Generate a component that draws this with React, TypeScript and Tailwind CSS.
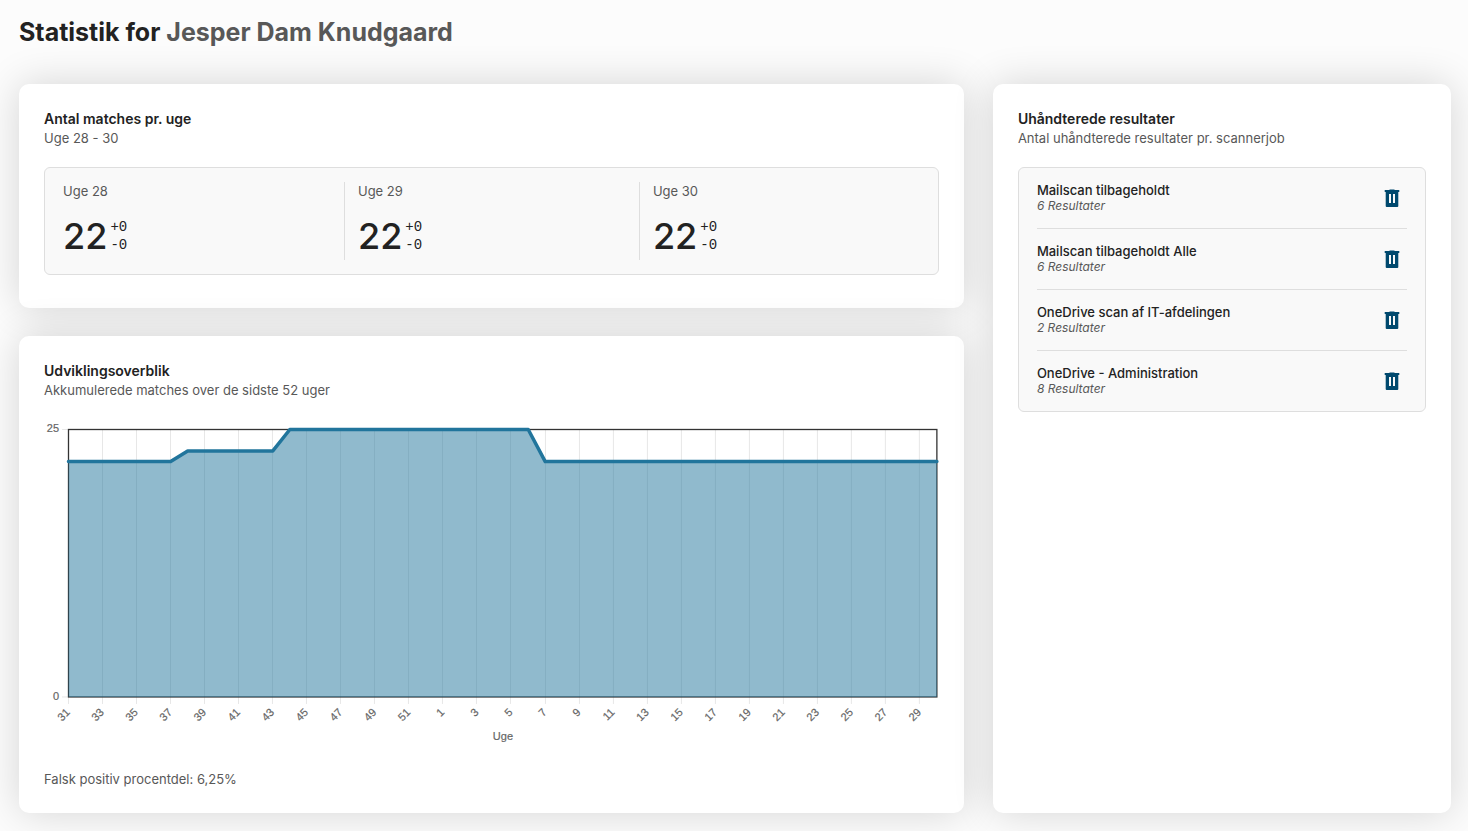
import React from "react";

const weeks = [28, 29, 30];

const jobs = [
  { name: "Mailscan tilbageholdt", count: 6 },
  { name: "Mailscan tilbageholdt Alle", count: 6 },
  { name: "OneDrive scan af IT-afdelingen", count: 2 },
  { name: "OneDrive - Administration", count: 8 },
];

const series = [
  ...Array(7).fill(22),
  ...Array(6).fill(23),
  ...Array(15).fill(25),
  ...Array(24).fill(22),
] as number[];

const weekNumbers = series.map((_, i) => (i < 22 ? 31 + i : i - 21));

function Card({ title, subtitle, className = "", children }: {
  title: string;
  subtitle: string;
  className?: string;
  children: React.ReactNode;
}) {
  return (
    <section className={`rounded-[10px] bg-white px-[25px] pt-[25px] shadow-[0_0_40px_rgba(0,0,0,0.16)] ${className}`}>
      <h2 className="text-sm leading-5 font-semibold">{title}</h2>
      <p className="text-[13px] leading-[18px] text-[#585858]">{subtitle}</p>
      {children}
    </section>
  );
}

function TrashIcon() {
  return (
    <svg viewBox="0 0 16 18" className="h-[18px] w-4" fill="#00496e" aria-hidden="true">
      <path fillRule="evenodd" d="M5.5 0.5h5V1H15.300v2h-1V17a1 1 0 0 1-1 1H2.700a1 1 0 0 1-1-1V3h-1V1h4.800zM5 5v9h2V5zM9 5v9h2V5z" />
    </svg>
  );
}

function Chart() {
  const left = 24.5;
  const right = 893;
  const top = 9.5;
  const bottom = 277;
  const x = (i: number) => left + (i * (right - left)) / (series.length - 1);
  const y = (v: number) => bottom - (v * (bottom - top)) / 25;
  const line = series.map((v, i) => `${x(i)},${y(v)}`).join(" ");
  return (
    <svg viewBox="0 0 895 330" className="mt-[21px] block w-full font-['Liberation_Sans',sans-serif] text-[11px]" fill="#666" role="img" aria-label="Akkumulerede matches">
      {weekNumbers.map((w, i) =>
        i % 2 === 0 ? (
          <g key={i}>
            <line x1={Math.floor(x(i) - 0.3) + 0.5} x2={Math.floor(x(i) - 0.3) + 0.5} y1={top} y2={bottom + 7} stroke="#000" strokeOpacity="0.1" />
            <text textAnchor="end" dominantBaseline="middle" transform={`translate(${x(i)} ${bottom + 14}) rotate(-45)`} stroke="#666" strokeWidth="0.2">{w}</text>
          </g>
        ) : null,
      )}
      <path d={`M18 ${top}H${left}M18 ${bottom}H${left}`} stroke="#000" strokeOpacity="0.1" />
      <rect x={left} y={top} width={right - left} height={bottom - top} fill="none" stroke="#333" strokeWidth="1.3" />
      <polygon points={`${left},${bottom} ${line} ${right},${bottom}`} fill="#21759c" fillOpacity="0.5" />
      <polyline points={line} fill="none" stroke="#21759c" strokeWidth="3.5" strokeLinejoin="round" strokeLinecap="round" />
      <g stroke="#666" strokeWidth="0.2">
        <text x="15" y="12" textAnchor="end">25</text>
        <text x="15" y="280" textAnchor="end">0</text>
        <text x="459" y="320" textAnchor="middle">Uge</text>
      </g>
    </svg>
  );
}

export default function App() {
  return (
    <main className="min-h-screen bg-[#fcfcfc] pt-[14px] pr-[17px] pb-[18px] pl-[19px] font-['Inter',sans-serif] text-[#222]">
      <h1 className="text-[25px] leading-9 font-bold">
        Statistik for <span className="text-[#585858]">Jesper Dam Knudgaard</span>
      </h1>
      <div className="mt-[34px] grid grid-cols-[33fr_16fr] gap-[29px]">
        <div className="flex flex-col gap-7">
          <Card title="Antal matches pr. uge" subtitle="Uge 28 - 30" className="pb-[33px]">
            <div className="mt-5 grid grid-cols-3 rounded-md border border-[#dedede] bg-[#f9f9f9] px-1 py-[14px]">
              {weeks.map((week) => (
                <div key={week} className="h-[78px] border-l border-[#dedede] px-[13px] first:border-l-transparent">
                  <p className="text-[13px] leading-[18px] text-[#585858]">Uge {week}</p>
                  <div className="mt-[18px] flex items-center gap-[3px]">
                    <span className="text-4xl leading-9 font-medium">22</span>
                    <span className="flex flex-col font-['Liberation_Mono',monospace] text-sm leading-[18px]">
                      <span>+0</span>
                      <span>-0</span>
                    </span>
                  </div>
                </div>
              ))}
            </div>
          </Card>
          <Card title="Udviklingsoverblik" subtitle="Akkumulerede matches over de sidste 52 uger" className="pb-[25px]">
            <Chart />
            <p className="mt-5 text-[13px] leading-[18px] text-[#585858]">Falsk positiv procentdel: 6,25%</p>
          </Card>
        </div>
        <Card title="Uhåndterede resultater" subtitle="Antal uhåndterede resultater pr. scannerjob">
          <ul className="mt-5 rounded-md border border-[#dedede] bg-[#f9f9f9] px-[18px]">
            {jobs.map((job) => (
              <li key={job.name} className="flex h-[61px] items-center justify-between border-b border-[#dedede] last:h-[60px] last:border-b-0">
                <div>
                  <p className="text-[13px] leading-[15px] font-medium">{job.name}</p>
                  <p className="text-xs leading-[15px] text-[#585858] italic">{job.count} Resultater</p>
                </div>
                <button type="button" aria-label={`Slet ${job.name}`} className="mr-[7px] cursor-pointer">
                  <TrashIcon />
                </button>
              </li>
            ))}
          </ul>
        </Card>
      </div>
    </main>
  );
}
